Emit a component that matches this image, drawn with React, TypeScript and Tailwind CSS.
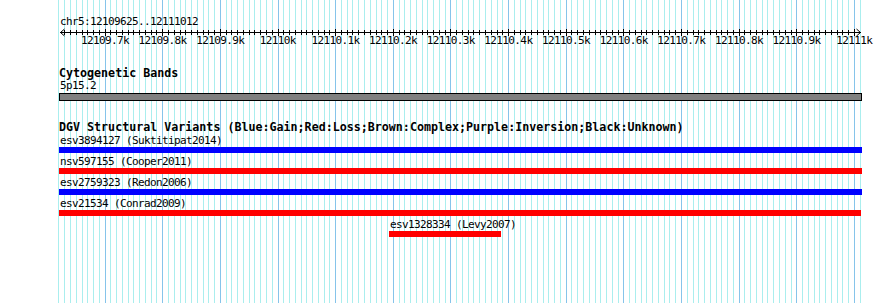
import { ReactNode } from 'react';

// scale: px position of a base pair on the 803px track panel
const BP0 = 12109700;
const PX0 = 104.6;
const PX_PER_BP = 0.5764;
const xOf = (bp: number) => PX0 + (bp - BP0) * PX_PER_BP;

const majorTicks = [
  12109700, 12109800, 12109900, 12110000, 12110100, 12110200, 12110300,
  12110400, 12110500, 12110600, 12110700, 12110800, 12110900, 12111000,
];

const tickLabel = (bp: number) => `${bp / 1000}k`;

interface Variant {
  id: string;
  study: string;
  kind: 'gain' | 'loss';
  offset: number;
  width: number;
}

const variants: Variant[] = [
  { id: 'esv3894127', study: 'Suktitipat2014', kind: 'gain', offset: 0, width: 803 },
  { id: 'nsv597155', study: 'Cooper2011', kind: 'loss', offset: 0, width: 803 },
  { id: 'esv2759323', study: 'Redon2006', kind: 'gain', offset: 0, width: 803 },
  { id: 'esv21534', study: 'Conrad2009', kind: 'loss', offset: 0, width: 802 },
  { id: 'esv1328334', study: 'Levy2007', kind: 'loss', offset: 330, width: 112 },
];

function GridLines() {
  const lines: ReactNode[] = [];
  for (let bp = 12109620; bp <= 12111010; bp += 10) {
    const x = Math.round(xOf(bp)) + 0.5;
    const major = bp % 100 === 0;
    lines.push(
      <line key={bp} x1={x} x2={x} y1={0} y2={303} stroke={major ? '#86c4ea' : '#aaeeee'} strokeWidth={1} />
    );
  }
  return (
    <svg className="absolute inset-0" width={890} height={303}>
      {lines}
    </svg>
  );
}

function Ruler() {
  const ticks: ReactNode[] = [];
  for (let bp = 12109630; bp <= 12111000; bp += 10) {
    const x = Math.round(xOf(bp)) + 0.5;
    const major = bp % 100 === 0;
    ticks.push(
      <line key={bp} x1={x} x2={x} y1={major ? 2 : 3} y2={major ? 9 : 8} stroke="#000" strokeWidth={1} />
    );
  }
  return (
    <svg className="block" width={890} height={21}>
      <line x1={60} x2={861} y1={5.5} y2={5.5} stroke="#000" strokeWidth={1} />
      <polyline points="64.5,2 60.5,5.5 64.5,9" fill="none" stroke="#000" strokeWidth={1} />
      <polyline points="856.5,2 860.5,5.5 856.5,9" fill="none" stroke="#000" strokeWidth={1} />
      {ticks}
      {majorTicks.map((bp) => (
        <text
          key={bp}
          x={xOf(bp) + 0.3}
          y={17}
          textAnchor="middle"
          fontSize={11}
          letterSpacing={-0.62}
          fontFamily="'DejaVu Sans Mono', monospace"
          fill="#000"
        >
          {tickLabel(bp)}
        </text>
      ))}
    </svg>
  );
}

function VariantRow({ variant }: { variant: Variant }) {
  const barColor = variant.kind === 'gain' ? 'bg-[#0000ff]' : 'bg-[#ff0000]';
  return (
    <div className="flex flex-col" style={{ marginLeft: variant.offset }}>
      <div className="pl-[1px] text-[11px] tracking-[-0.62px] leading-[11px] whitespace-nowrap">
        {variant.id} ({variant.study})
      </div>
      <div className={`mt-[1px] h-[6px] ${barColor}`} style={{ width: variant.width }} />
    </div>
  );
}

export default function App() {
  return (
    <div className="relative w-[890px] h-[303px] overflow-hidden bg-white text-black font-['DejaVu_Sans_Mono',monospace]">
      <GridLines />

      <div className="relative flex flex-col">
        <div className="pt-[16px] pl-[60px] text-[11px] tracking-[-0.62px] leading-[11px]">chr5:12109625..12111012</div>
        <Ruler />

        {/* cytogenetic band track */}
        <div className="mt-[19px] pl-[59px] text-[11.67px] font-bold leading-[12px]">Cytogenetic Bands</div>
        <div className="mt-[1px] pl-[60px] text-[11px] tracking-[-0.62px] leading-[11px]">5p15.2</div>
        <div className="mt-[2px] ml-[59px] w-[803px] h-[8px] border border-black bg-[#808080]" />

        {/* DGV track */}
        <div className="mt-[20px] pl-[59px] text-[11.67px] font-bold leading-[12px] whitespace-nowrap">
          DGV Structural Variants (Blue:Gain;Red:Loss;Brown:Complex;Purple:Inversion;Black:Unknown)
        </div>
        <div className="mt-[2px] pl-[59px] flex flex-col gap-[3px]">
          {variants.map((v) => (
            <VariantRow key={v.id} variant={v} />
          ))}
        </div>
      </div>
    </div>
  );
}
